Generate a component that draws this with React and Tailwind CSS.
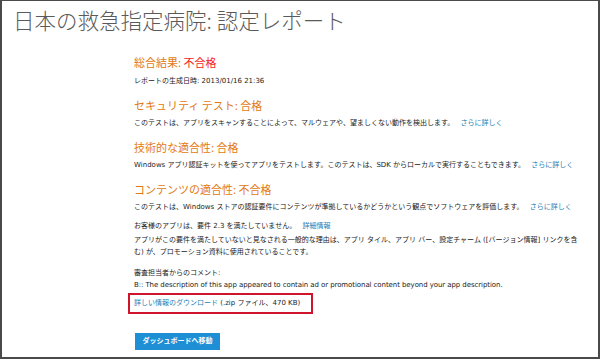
export default function App() {
  const head = "text-[11px] leading-[14px] text-[#e27a12] font-['Noto_Sans_CJK_JP',sans-serif]";
  const link = "ml-[4px] text-[#1b7db5]";
  return (
    <div className="w-[600px] h-[359px] bg-white border-l-2 border-r-2 border-b-2 border-t border-[#4a4a4a] overflow-hidden font-['DejaVu_Sans','Noto_Sans_CJK_JP',sans-serif]">
      <h1 className="pt-[5px] pl-[11px] text-[21.5px] leading-[28px] font-light text-[#5a5a5a] font-['Noto_Sans_CJK_JP',sans-serif]">日本の救急指定病院: 認定レポート</h1>
      <div className="pl-[132px] pr-[12px] text-[7px] leading-[12px] text-[#222222]">
        <div className={`mt-[21px] ${head}`}>総合結果: <span className="text-[#f2241e]">不合格</span></div>
        <div className="mt-[6px]">レポートの生成日時: 2013/01/16 21:36</div>

        <div className={`mt-[11px] ${head}`}>セキュリティ テスト: 合格</div>
        <div className="mt-[5px]">このテストは、アプリをスキャンすることによって、マルウェアや、望ましくない動作を検出します。 <a className={link}>さらに詳しく</a></div>

        <div className={`mt-[11px] ${head}`}>技術的な適合性: 合格</div>
        <div className="mt-[5px]">Windows アプリ認証キットを使ってアプリをテストします。このテストは、SDK からローカルで実行することもできます。 <a className={link}>さらに詳しく</a></div>

        <div className={`mt-[11px] ${head}`}>コンテンツの適合性: 不合格</div>
        <div className="mt-[5px]">このテストは、Windows ストアの認証要件にコンテンツが準拠しているかどうかという観点でソフトウェアを評価します。 <a className={link}>さらに詳しく</a></div>

        <div className="mt-[7px]">お客様のアプリは、要件 2.3 を満たしていません。 <a className={link}>詳細情報</a></div>
        <div className="mt-[2px]">アプリがこの要件を満たしていないと見なされる一般的な理由は、アプリ タイル、アプリ バー、設定チャーム ([バージョン情報] リンクを含む) が、プロモーション資料に使用されていることです。</div>

        <div className="mt-[9px]">審査担当者からのコメント:</div>
        <div className="tracking-[-0.08px]">B:: The description of this app appeared to contain ad or promotional content beyond your app description.</div>

        <div className="mt-[2px] -ml-[6px] inline-block border-2 border-[#d0142c] pl-[4px] pr-[11px] leading-[17px]">
          <a className="text-[#1b7db5]">詳しい情報のダウンロード</a> (.zip ファイル、470 KB)
        </div>

        <div className="mt-[19px] ml-[1px]">
          <button className="h-[17px] w-[85px] bg-[#1e8fd5] text-white font-bold text-[7px] leading-[17px]">ダッシュボードへ移動</button>
        </div>
      </div>
    </div>
  );
}
